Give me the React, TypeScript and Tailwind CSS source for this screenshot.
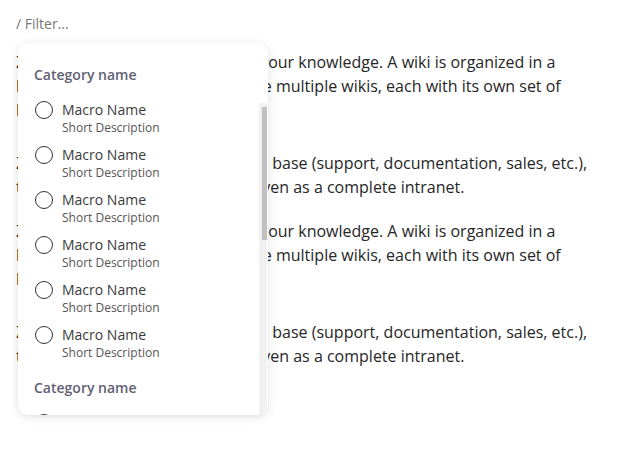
import * as React from "react";

const macros = Array.from({ length: 6 }, () => ({
  name: "Macro Name",
  description: "Short Description",
}));

function MacroItem({ name, description }: { name: string; description: string }) {
  return (
    <div className="flex items-start gap-[9px] pl-[17px]">
      <span className="mt-[1px] h-[18px] w-[18px] shrink-0 rounded-full border-[1.5px] border-[#333]" />
      <div className="flex flex-col">
        <span className="text-[14px] leading-[20px] text-[#3b3b3b]">{name}</span>
        <span className="text-[12px] leading-[16px] text-[#555]">{description}</span>
      </div>
    </div>
  );
}

function Category({ title, items }: { title: string; items: typeof macros }) {
  return (
    <div className="flex flex-col">
      <div className="pl-4 text-[14px] font-semibold leading-[20px] text-[#625f73]">{title}</div>
      <div className="mt-[15px] flex flex-col gap-[9px]">
        {items.map((m, i) => (
          <MacroItem key={i} {...m} />
        ))}
      </div>
    </div>
  );
}

function Paragraphs() {
  return (
    <>
      <p className="mb-[29px]">
        <span className="block whitespace-nowrap">Zendesk Guide helps you gather your knowledge. A wiki is organized in a</span>
        <span className="block whitespace-nowrap">hierarchy of pages. You can create multiple wikis, each with its own set of</span>
        <span className="block whitespace-nowrap">linked pages and permissions.</span>
      </p>
      <p className="mb-[20px]">
        <span className="block whitespace-nowrap">Zendesk can be run as knowledge base (support, documentation, sales, etc.),</span>
        <span className="block whitespace-nowrap">team wikis, onboarding docs or even as a complete intranet.</span>
      </p>
    </>
  );
}

export default function App() {
  return (
    <div className="relative min-h-[455px] w-[625px] overflow-hidden bg-white px-4 pt-[15px] font-['Open_Sans',sans-serif]">
      <div className="text-[14px] leading-[18px] text-[#777]">/ Filter...</div>

      <div className="mt-[17px] text-[16px] leading-[24px] text-[#262626]">
        <Paragraphs />
        <Paragraphs />
      </div>

      {/* dropdown */}
      <div className="absolute left-[18px] top-[43px] h-[372px] w-[250px] overflow-hidden rounded-[10px] bg-white shadow-[0_2px_10px_rgba(0,0,0,0.13)]">
        <div className="flex flex-col gap-[17px] pt-[22px]">
          <Category title="Category name" items={macros} />
          <Category title="Category name" items={macros} />
        </div>
        <div className="absolute bottom-0 right-[1px] top-[60px] w-[8px] bg-[#f1f1f1]">
          <div className="absolute left-[3px] top-[4px] h-[133px] w-[5px] bg-[#c1c1c1]" />
        </div>
      </div>
    </div>
  );
}
